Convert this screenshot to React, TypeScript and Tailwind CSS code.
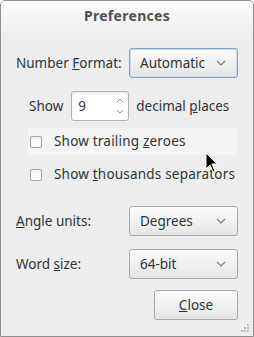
import React from "react";

const Chevron = () => (
  <svg width="10" height="6" viewBox="0 0 10 6" className="shrink-0">
    <path d="M1 1 L5 5 L9 1" fill="none" stroke="#7a7a7a" strokeWidth="1.1" />
  </svg>
);

const Combo = ({ label, focused }: { label: string; focused?: boolean }) => (
  <div
    className={
      "w-[109px] h-[30px] rounded-[3px] border flex items-center justify-between pl-[10px] pr-[11px] bg-gradient-to-b from-[#fbfbfb] to-[#e6e6e6] " +
      (focused ? "border-[#7fa3cf] shadow-[inset_0_0_0_1px_#c8daef]" : "border-[#a9a9a9]")
    }
  >
    <span className="text-[13.5px] text-[#2e3436]">{label}</span>
    <Chevron />
  </div>
);

const Check = ({ children, hover }: { children: React.ReactNode; hover?: boolean }) => (
  <div className={"ml-[27px] mr-[15px] h-[27px] flex items-center " + (hover ? "bg-[#f4f4f4]" : "")}>
    <div className="ml-[2px] w-[12px] h-[12px] rounded-[2px] border border-[#a3a3a3] bg-gradient-to-b from-[#f2f2f2] to-[#fdfdfd]" />
    <span className="ml-[12px] text-[13.5px] text-[#2e3436] tracking-[0.2px]">{children}</span>
  </div>
);

export default function App() {
  return (
    <div
      className="relative w-[254px] h-[337px] bg-[#ededed] border border-[#8f8f8f] rounded-t-[5px] overflow-hidden"
      style={{ fontFamily: '"Noto Sans", "Open Sans", sans-serif' }}
    >
      <div className="h-[40px] -mt-[1px] bg-gradient-to-b from-[#fbfbfb] to-[#ededed] flex justify-center pt-[5px]">
        <span className="text-[14px] font-bold text-[#505050] tracking-[0.3px]">Preferences</span>
      </div>

      <div className="mt-[8px] flex items-center justify-between pl-[15px] pr-[15px]">
        <span className="text-[13.5px] text-[#2e3436]">
          Number <span className="underline">F</span>ormat:
        </span>
        <Combo label="Automatic" focused />
      </div>

      <div className="mt-[13px] flex items-center pl-[28px]">
        <span className="text-[13.5px] text-[#2e3436]">Show</span>
        <div className="ml-[8px] w-[58px] h-[30px] rounded-[3px] border border-[#b2b2b2] bg-white shadow-[inset_0_2px_2px_rgba(0,0,0,0.08)] flex items-center justify-between pl-[6px] pr-[3px]">
          <span className="text-[13.5px] text-[#2e3436]">9</span>
          <svg width="10" height="20" viewBox="0 0 10 20">
            <path d="M2 6 L5 3 L8 6" fill="none" stroke="#8a8a8a" strokeWidth="1" />
            <path d="M2 14 L5 17 L8 14" fill="none" stroke="#8a8a8a" strokeWidth="1" />
          </svg>
        </div>
        <span className="ml-[7px] text-[13.5px] text-[#2e3436]">
          decimal <span className="underline">p</span>laces
        </span>
      </div>

      <div className="mt-[7px]">
        <Check hover>
          Show trailing <span className="underline">z</span>eroes
        </Check>
      </div>
      <div className="mt-[6px]">
        <Check>
          Show <span className="underline">t</span>housands separators
        </Check>
      </div>

      <div className="mt-[18px] flex items-center justify-between pl-[15px] pr-[15px]">
        <span className="text-[13.5px] text-[#2e3436]">
          <span className="underline">A</span>ngle units:
        </span>
        <Combo label="Degrees" />
      </div>

      <div className="mt-[13px] flex items-center justify-between pl-[15px] pr-[15px]">
        <span className="text-[13.5px] text-[#2e3436]">
          Word <span className="underline">s</span>ize:
        </span>
        <Combo label="64-bit" />
      </div>

      <div className="mt-[11px] flex justify-end pr-[15px]">
        <div className="w-[84px] h-[30px] rounded-[3px] border border-[#a9a9a9] bg-gradient-to-b from-[#fbfbfb] to-[#e6e6e6] flex items-center justify-center">
          <span className="text-[13.5px] text-[#2e3436]">
            <span className="underline">C</span>lose
          </span>
        </div>
      </div>

      <svg className="absolute right-[3px] bottom-[3px]" width="10" height="10" viewBox="0 0 10 10">
        {[
          [7, 1], [4, 4], [7, 4], [1, 7], [4, 7], [7, 7],
        ].map(([x, y], i) => (
          <rect key={i} x={x} y={y} width="2" height="2" fill="#bdbdbd" />
        ))}
      </svg>

      <svg className="absolute left-[204px] top-[151px]" width="14" height="22" viewBox="0 0 14 22">
        <path d="M1 1 L1 17 L5 13 L8 20 L10 19 L7 12 L12 12 Z" fill="#000" stroke="#fff" strokeWidth="1" strokeLinejoin="round" />
      </svg>
    </div>
  );
}
